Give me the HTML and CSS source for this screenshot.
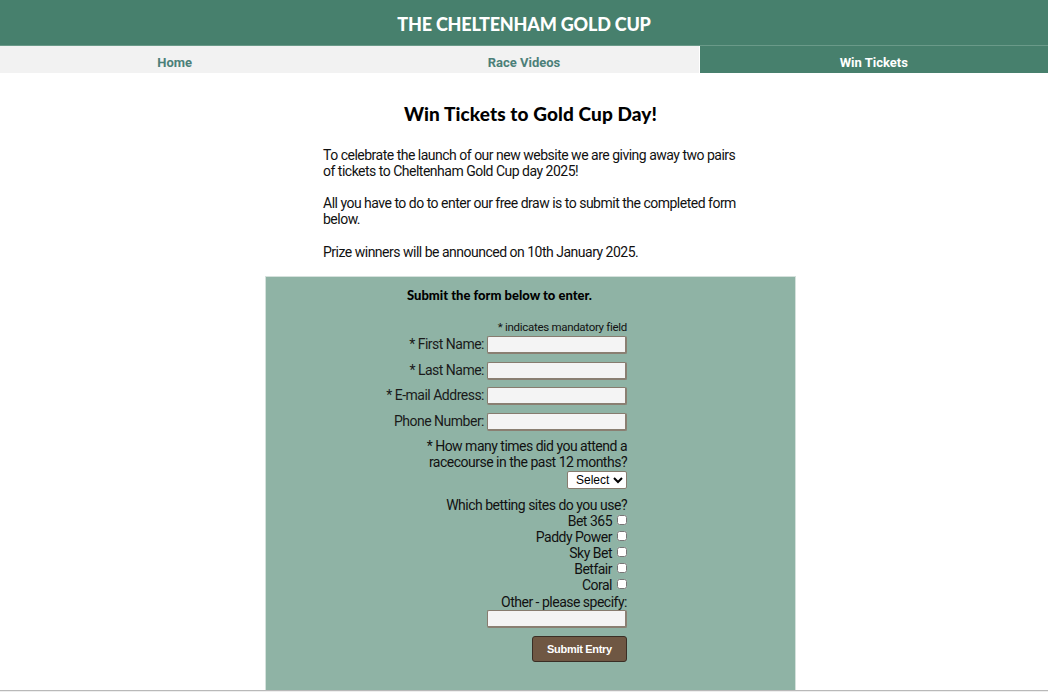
FILE: index.html
```html
<!DOCTYPE html>
<html lang="en">
<head>
<meta charset="utf-8">
<title>Win Tickets - The Cheltenham Gold Cup</title>
<link rel="stylesheet" href="styles.css">
</head>
<body>
<header class="site-header">
  <h1 class="site-title">THE CHELTENHAM GOLD CUP</h1>
</header>
<nav class="nav">
  <a class="nav-item" href="#">Home</a>
  <a class="nav-item" href="#">Race Videos</a>
  <a class="nav-item active" href="#">Win Tickets</a>
</nav>
<main class="main">
  <div class="content">
    <h2 class="page-title">Win Tickets to Gold Cup Day!</h2>
    <div class="intro">
      <p>To celebrate the launch of our new website we are giving away two pairs of tickets to Cheltenham Gold Cup day 2025!</p>
      <p>All you have to do to enter our free draw is to submit the completed form below.</p>
      <p>Prize winners will be announced on 10th January 2025.</p>
    </div>
    <section class="form-box">
      <form class="entry-form">
        <h3 class="form-title">Submit the form below to enter.</h3>
        <div class="note">* indicates mandatory field</div>
        <div class="row"><label>* First Name:</label> <input type="text" class="field"></div>
        <div class="row"><label>* Last Name:</label> <input type="text" class="field"></div>
        <div class="row"><label>* E-mail Address:</label> <input type="text" class="field"></div>
        <div class="row"><label>Phone Number:</label> <input type="text" class="field"></div>
        <div class="question">
          <label>* How many times did you attend a racecourse in the past 12 months?</label>
          <div><select class="select"><option>Select</option></select></div>
        </div>
        <div class="group">
          <div class="group-label">Which betting sites do you use?</div>
          <div class="check">Bet 365 <input type="checkbox"></div>
          <div class="check">Paddy Power <input type="checkbox"></div>
          <div class="check">Sky Bet <input type="checkbox"></div>
          <div class="check">Betfair <input type="checkbox"></div>
          <div class="check">Coral <input type="checkbox"></div>
          <div class="other-label">Other - please specify:</div>
          <div><input type="text" class="field"></div>
        </div>
        <div class="actions"><button type="button" class="submit">Submit Entry</button></div>
      </form>
    </section>
  </div>
</main>
<footer class="footer"></footer>
</body>
</html>
```

FILE: styles.css
```css
* { box-sizing: border-box; }
html, body { margin: 0; padding: 0; }
body {
  font-family: Roboto, "Liberation Sans", sans-serif;
  font-size: 14px;
  letter-spacing: -0.5px;
  color: #111;
  background: #fff;
  overflow: hidden;
}
.site-header {
  background: #47806d;
  height: 46px;
  border-bottom: 1px solid #6a9a89;
  display: flex;
  align-items: center;
  justify-content: center;
}
.site-title {
  margin: 0;
  color: #fff;
  font-family: Lato, "Open Sans", sans-serif;
  font-weight: 900;
  font-size: 18px;
  letter-spacing: -0.2px;
  padding-top: 2px;
}
.nav {
  display: grid;
  grid-template-columns: 1fr 1fr 1fr;
  background: #f2f2f2;
  height: 27px;
}
.nav-item {
  display: flex;
  align-items: center;
  justify-content: center;
  text-decoration: none;
  color: #4c8079;
  font-weight: 700;
  font-size: 13px;
  letter-spacing: 0;
  padding-top: 6px;
}
.nav-item.active {
  background: #47806d;
  color: #fff;
  border-left: 1px solid #fff;
}
.main {
  display: flex;
  justify-content: center;
  padding-left: 13px;
}
.content {
  width: 531px;
  display: flex;
  flex-direction: column;
  align-items: center;
}
.page-title {
  margin: 29px 0 22px;
  font-family: Lato, "Open Sans", sans-serif;
  font-weight: 900;
  font-size: 19px;
  letter-spacing: 0.1px;
  color: #000;
}
.intro {
  width: 418px;
  margin-left: 3px;
  line-height: 16px;
  color: #111;
}
.intro p { margin: 0 0 16px; }
.intro p:nth-child(2) { margin-bottom: 17px; }
.form-box {
  width: 531px;
  height: 414px;
  background: #8fb3a5;
  border-left: 1px solid #d5e1dc;
  border-right: 1px solid #d5e1dc;
  border-top: 1px solid #d5e1dc;
  display: flex;
  padding-left: 106px;
}
.entry-form {
  width: 255px;
  text-align: right;
  display: flex;
  flex-direction: column;
}
.form-title {
  text-align: center;
  margin: 10px 0 0;
  font-family: Lato, "Open Sans", sans-serif;
  font-weight: 900;
  font-size: 13px;
  letter-spacing: 0;
  color: #000;
  line-height: 16px;
}
.note {
  font-size: 11.5px;
  letter-spacing: -0.3px;
  margin-top: 17px;
  line-height: 14px;
}
.row {
  margin-top: -1px;
  line-height: 22px;
}
.row + .row { margin-top: 4px; }
.row:nth-of-type(4) { margin-top: 3px; }
.row label { color: #1a1a1a; }
.field {
  width: 140px;
  height: 18px;
  border-style: solid;
  border-width: 1px 2px 2px 1px;
  border-color: #877c6f #8a7f72 #8a7f72 #877c6f;
  border-radius: 2px;
  background: #f4f4f4;
  vertical-align: middle;
  margin: 0;
  padding: 0 2px;
  font-size: 13px;
}
.question {
  margin-top: 6px;
  line-height: 16px;
  padding-left: 40px;
}
.select {
  margin-top: 1px;
  height: 18px;
  font-family: "Liberation Sans", Arial, sans-serif;
  font-size: 12px;
  letter-spacing: 0;
  background: #fff;
  border: 1px solid #877c6f;
  border-radius: 2px;
  padding: 0 0 0 4px;
}
.group {
  margin-top: 8px;
  line-height: 16px;
}
.check input {
  margin: 0 0 0 2px;
  width: 10px;
  height: 10px;
  vertical-align: 1px;
}
.other-label { margin-top: 1px; }
.actions {
  margin-top: 8px;
}
.submit {
  width: 95px;
  height: 26px;
  background: #6f5743;
  color: #fff;
  font-family: "Liberation Sans", Arial, sans-serif;
  font-weight: 700;
  font-size: 11px;
  letter-spacing: -0.3px;
  border: 1px solid #3a2e25;
  border-radius: 3px;
  margin: 0;
}
.footer {
  border-top: 1px solid #b9b9b9;
  background: #eee;
  height: 20px;
}
```
